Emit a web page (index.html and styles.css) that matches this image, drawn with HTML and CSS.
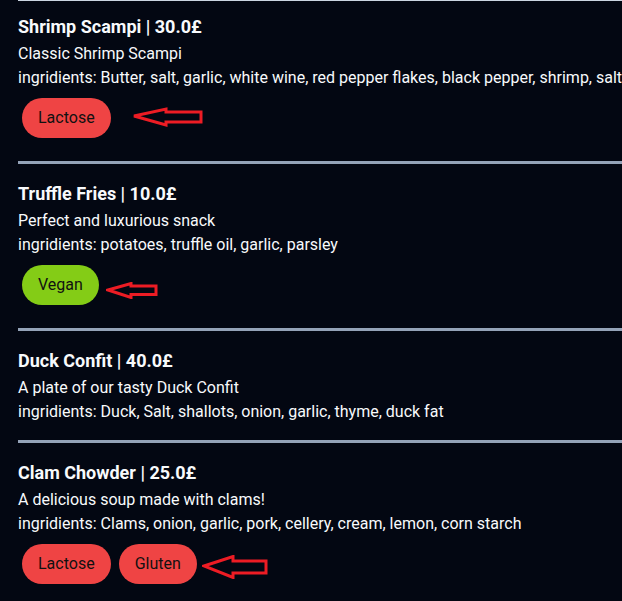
FILE: index.html
```html
<!DOCTYPE html>
<html lang="en">
<head>
<meta charset="utf-8">
<title>Menu</title>
<link rel="stylesheet" href="styles.css">
</head>
<body>
<main class="menu">
  <section class="dish">
    <h2 class="dish-title">Shrimp Scampi | 30.0£</h2>
    <p class="dish-desc">Classic Shrimp Scampi</p>
    <p class="dish-ingr">ingridients: Butter, salt, garlic, white wine, red pepper flakes, black pepper, shrimp, salt</p>
    <div class="tags">
      <span class="tag tag-red">Lactose</span>
      <svg class="arrow arrow-a" width="72" height="20" viewBox="0 0 72 20"><polygon points="2,9 34,2 34,5 69,5 69,15 34,15 34,18" fill="none" stroke="#ed1c24" stroke-width="3" stroke-linejoin="miter"/></svg>
    </div>
  </section>
  <section class="dish">
    <h2 class="dish-title">Truffle Fries | 10.0£</h2>
    <p class="dish-desc">Perfect and luxurious snack</p>
    <p class="dish-ingr">ingridients: potatoes, truffle oil, garlic, parsley</p>
    <div class="tags">
      <span class="tag tag-green">Vegan</span>
      <svg class="arrow arrow-b" width="52" height="17" viewBox="0 0 52 17"><polygon points="2,8 25,1.5 25,4 50,4 50,12.5 25,12.5 25,15.5" fill="none" stroke="#ed1c24" stroke-width="3"/></svg>
    </div>
  </section>
  <section class="dish">
    <h2 class="dish-title">Duck Confit | 40.0£</h2>
    <p class="dish-desc">A plate of our tasty Duck Confit</p>
    <p class="dish-ingr">ingridients: Duck, Salt, shallots, onion, garlic, thyme, duck fat</p>
  </section>
  <section class="dish">
    <h2 class="dish-title">Clam Chowder | 25.0£</h2>
    <p class="dish-desc">A delicious soup made with clams!</p>
    <p class="dish-ingr">ingridients: Clams, onion, garlic, pork, cellery, cream, lemon, corn starch</p>
    <div class="tags">
      <span class="tag tag-red">Lactose</span>
      <span class="tag tag-red">Gluten</span>
      <svg class="arrow arrow-c" width="66" height="24" viewBox="0 0 66 24"><polygon points="2,11 31,1.5 31,6 64,6 64,18 31,18 31,22.5" fill="none" stroke="#ed1c24" stroke-width="3"/></svg>
    </div>
  </section>
</main>
</body>
</html>
```

FILE: styles.css
```css
html, body {
  margin: 0;
  padding: 0;
  background: #030712;
  overflow: hidden;
}

body {
  font-family: Roboto, "Liberation Sans", sans-serif;
  color: #f8fafc;
  width: 622px;
}

.menu {
  border-top: 1px solid #cbd5e1;
  margin-left: 18px;
}

.dish {
  padding: 18px 0 16px;
  border-bottom: 3px solid #94a3b8;
}

.dish:first-child {
  padding-top: 14px;
}

.dish:last-child {
  border-bottom: none;
}

.dish-title {
  margin: 0 0 3px;
  font-size: 18px;
  line-height: 24px;
  font-weight: 700;
  white-space: nowrap;
}

.dish-desc,
.dish-ingr {
  margin: 0;
  font-size: 16px;
  line-height: 24px;
  white-space: nowrap;
}

.tags {
  display: flex;
  align-items: center;
  margin: 8px 0 7px;
}

.tag {
  margin: 0 4px;
  padding: 8px 16px;
  border-radius: 9999px;
  font-size: 16px;
  line-height: 24px;
  color: #111111;
}

.tag-red {
  background: #ef4444;
}

.tag-green {
  background: #84cc16;
}

.arrow {
  display: block;
}

.arrow-a {
  margin-left: 17px;
  margin-top: -2px;
}

.arrow-b {
  margin-left: 3px;
  margin-top: 11px;
}

.arrow-c {
  margin-left: 1px;
  margin-top: 6px;
}
```
